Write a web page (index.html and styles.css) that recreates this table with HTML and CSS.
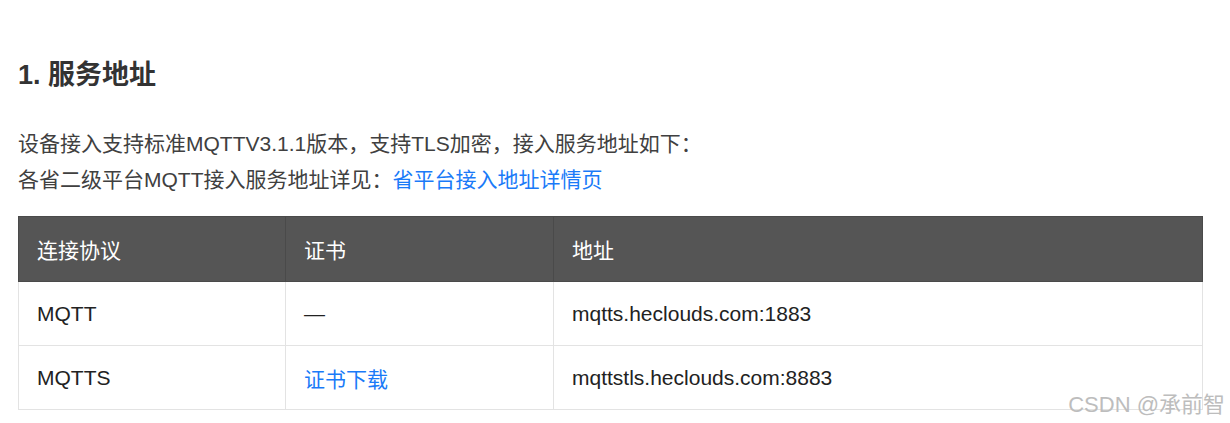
FILE: index.html
```html
<!DOCTYPE html>
<html lang="zh-CN">
<head>
<meta charset="utf-8">
<link rel="stylesheet" href="styles.css">
</head>
<body>
<div class="doc">
  <h3 class="title">1. 服务地址</h3>
  <p class="text">设备接入支持标准MQTTV3.1.1版本，支持TLS加密，接入服务地址如下：<br>各省二级平台MQTT接入服务地址详见：<a class="link" href="#">省平台接入地址详情页</a></p>
  <table class="tbl">
    <colgroup><col class="c1"><col class="c2"><col class="c3"></colgroup>
    <thead>
      <tr><th>连接协议</th><th>证书</th><th>地址</th></tr>
    </thead>
    <tbody>
      <tr><td>MQTT</td><td>—</td><td>mqtts.heclouds.com:1883</td></tr>
      <tr><td>MQTTS</td><td><a class="link" href="#">证书下载</a></td><td>mqttstls.heclouds.com:8883</td></tr>
    </tbody>
  </table>
</div>
<div class="watermark">CSDN @承前智</div>
</body>
</html>
```
FILE: styles.css
```css
html, body {
  margin: 0;
  padding: 0;
  background: #fff;
}
body {
  width: 1230px;
  height: 423px;
  overflow: hidden;
  position: relative;
  font-family: "Liberation Sans", Arial, "Noto Sans CJK SC", sans-serif;
  color: #333;
}
.doc {
  padding: 57px 0 0 18px;
  width: 1184px;
}
.title {
  margin: 0 0 33px;
  font-size: 27px;
  line-height: 36px;
  font-weight: 700;
  color: #333;
}
.text {
  margin: 0 0 18px;
  font-size: 21px;
  line-height: 36px;
  color: #404040;
}
.link {
  color: #1a7af8;
  text-decoration: none;
}
.tbl {
  width: 1185px;
  border-collapse: collapse;
  table-layout: fixed;
  font-size: 21px;
  color: #222;
}
.c1 { width: 267px; }
.c2 { width: 268px; }
.tbl th {
  background: #555;
  color: #fff;
  font-weight: 400;
  text-align: left;
  height: 64px;
  padding: 0 18px;
  border: 1px solid #4a4a4a;
}
.tbl td {
  height: 63px;
  padding: 0 18px;
  border: 1px solid #e3e3e3;
}
.watermark {
  position: absolute;
  right: 5px;
  top: 390px;
  font-size: 22px;
  line-height: 30px;
  color: #bdbdbd;
  font-family: "Liberation Sans", Arial, "Noto Sans CJK SC", sans-serif;
}
```
